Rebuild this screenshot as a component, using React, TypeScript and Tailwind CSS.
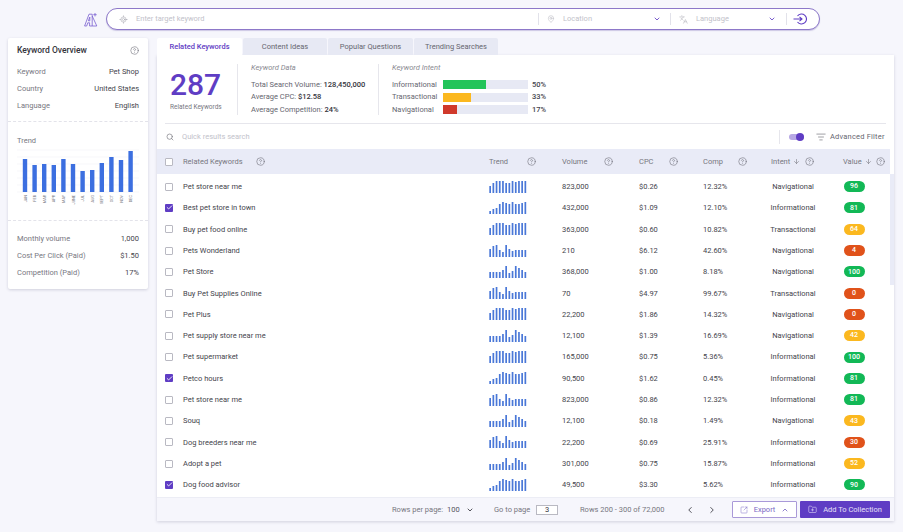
import { ChevronDown, ChevronUp, ChevronLeft, ChevronRight, Search, ArrowDown, CircleHelp, MapPin, Languages, ListFilter, Check, SquareArrowOutUpRight, FolderPlus, LocateFixed } from "lucide-react";

const spark: Record<string, number[]> = {
  a: [7, 10, 12, 12, 12, 10, 10, 12, 11, 12, 12, 12],
  b: [3, 5, 6, 10, 12, 11, 10, 12, 10, 10, 11, 12],
  c: [8, 11, 12, 7, 5, 12, 8, 6, 7, 7, 7, 7],
  d: [6, 6, 6, 6, 8, 12, 5, 7, 12, 10, 8, 6],
};

const rows = [
  ["Pet store near me", "a", "823,000", "$0.26", "12.32%", "Navigational", 96, false],
  ["Best pet store in town", "b", "432,000", "$1.09", "12.10%", "Informational", 81, true],
  ["Buy pet food online", "a", "363,000", "$0.60", "10.82%", "Transactional", 64, false],
  ["Pets Wonderland", "c", "210", "$6.12", "42.60%", "Navigational", 4, false],
  ["Pet Store", "d", "368,000", "$1.00", "8.18%", "Navigational", 100, false],
  ["Buy Pet Supplies Online", "c", "70", "$4.97", "99.67%", "Transactional", 0, false],
  ["Pet Plus", "a", "22,200", "$1.86", "14.32%", "Navigational", 0, false],
  ["Pet supply store near me", "d", "12,100", "$1.39", "16.69%", "Navigational", 42, false],
  ["Pet supermarket", "a", "165,000", "$0.75", "5.36%", "Informational", 100, false],
  ["Petco hours", "b", "90,500", "$1.62", "0.45%", "Informational", 81, true],
  ["Pet store near me", "c", "823,000", "$0.86", "12.32%", "Informational", 81, false],
  ["Souq", "d", "12,100", "$0.18", "1.49%", "Navigational", 43, false],
  ["Dog breeders near me", "c", "22,200", "$0.69", "25.91%", "Informational", 30, false],
  ["Adopt a pet", "d", "301,000", "$0.75", "15.87%", "Informational", 52, false],
  ["Dog food advisor", "b", "49,500", "$3.30", "5.62%", "Informational", 90, true],
] as const;

const months = ["JAN", "FEB", "MAR", "APR", "MAY", "JUNE", "JUL", "AUG", "SEPT", "OCT", "NOV", "DEC"];
const monthBars = [33, 27, 28, 27, 33, 28, 21, 22, 29, 35, 32, 41];

function pillColor(v: number) {
  if (v >= 80) return "bg-[#12b856]";
  if (v >= 40) return "bg-[#fbb81f]";
  return "bg-[#e0521a]";
}

const Help = ({ className = "" }: { className?: string }) => (
  <CircleHelp className={`w-[9px] h-[9px] text-[#6b6b76] shrink-0 ${className}`} strokeWidth={1.5} />
);

const Box = ({ on }: { on?: boolean }) =>
  on ? (
    <div className="w-[8px] h-[8px] rounded-[1px] bg-[#5f3dc4] flex items-center justify-center">
      <Check className="w-[7px] h-[7px] text-white" strokeWidth={3} />
    </div>
  ) : (
    <div className="w-[8px] h-[8px] rounded-[1px] border border-[#b9b9c2] bg-white" />
  );

const Spark = ({ kind }: { kind: string }) => (
  <svg width="38" height="12" viewBox="0 0 38 12" className="block">
    {spark[kind].map((h, i) => (
      <rect key={i} x={i * 3.2 + 0.3} y={12 - h} width="1.7" height={h} fill="#4a78d8" />
    ))}
  </svg>
);

const InfoRow = ({ label, value }: { label: string; value: string }) => (
  <div className="flex justify-between items-center h-[17px] text-[7.5px]">
    <span className="text-[#77777f]">{label}</span>
    <span className="text-[#44444c]">{value}</span>
  </div>
);

const Tab = ({ label, width, active }: { label: string; width: string; active?: boolean }) => (
  <div
    className={`h-[17px] flex items-center justify-center text-[7.5px] rounded-t-[2px] ${width} ${
      active ? "bg-white text-[#5f3dc4] font-medium" : "bg-[#e7e9f4] text-[#66666f]"
    }`}
  >
    {label}
  </div>
);

const Bar = ({ label, pct, color, width }: { label: string; pct: string; color: string; width: string }) => (
  <div className="flex items-center h-[12.7px] text-[7.5px]">
    <span className="w-[51px] text-[#66666f]">{label}</span>
    <div className="w-[85px] h-[9px] bg-[#e7e9f4]">
      <div className={`h-full ${color} ${width}`} />
    </div>
    <span className="ml-[4px] text-[#44444c] font-medium">{pct}</span>
  </div>
);

const tableCols = "grid grid-cols-[18px_306px_73px_77px_64px_60px_60px_62px] items-center pl-[8px]";

export default function App() {
  return (
    <div
      className="w-[903px] h-[532px] overflow-hidden bg-[#f6f6fc] text-[8px] text-[#33333b]"
      style={{ fontFamily: "Roboto, 'Liberation Sans', sans-serif" }}
    >
      {/* search bar */}
      <div className="h-[38px] pt-[8px] pl-[84px] flex items-start gap-[8px]">
        <div className="w-[14px] h-[22px] flex items-center">
          <svg width="14" height="15" viewBox="0 0 14 15" fill="none" stroke="#7a5fd0" strokeWidth="0.8">
            <path d="M0.6 14 L5 2.2 H8.2 V14 H5.6 V10.8 H3.8 L2.7 14 Z" />
            <path d="M4.4 8.8 L5.8 5 V8.8 Z" />
            <path d="M8.2 4 L12.8 14 H8.2" />
            <path d="M11 1 V4.4 M9.3 2.7 H12.7" />
          </svg>
        </div>
        <div className="w-[714px] h-[22px] bg-white rounded-full border border-[#8d78c9] shadow-[0_1px_1px_rgba(80,60,160,0.25)] flex items-center text-[7.5px] text-[#c2c2ca]">
          <LocateFixed className="w-[9px] h-[9px] ml-[12px] text-[#a9a9b2]" strokeWidth={1.5} />
          <span className="ml-[8px] flex-1">Enter target keyword</span>
          <div className="w-px h-[12px] bg-[#e2e2ea]" />
          <MapPin className="w-[8px] h-[8px] ml-[8px] text-[#b5b5bd]" strokeWidth={1.5} />
          <span className="ml-[8px] w-[90px]">Location</span>
          <ChevronDown className="w-[8px] h-[8px] text-[#5f3dc4]" strokeWidth={2.5} />
          <div className="w-px h-[12px] bg-[#e2e2ea] ml-[9px]" />
          <Languages className="w-[9px] h-[9px] ml-[8px] text-[#b5b5bd]" strokeWidth={1.5} />
          <span className="ml-[8px] w-[72px]">Language</span>
          <ChevronDown className="w-[8px] h-[8px] text-[#5f3dc4]" strokeWidth={2.5} />
          <div className="w-px h-[12px] bg-[#e2e2ea] ml-[10px]" />
          <svg width="14" height="12" viewBox="0 0 14 12" fill="none" stroke="#5f3dc4" strokeWidth="1.1" className="ml-[6px] mr-[12px]">
            <path d="M4.5 3 A5 5 0 1 1 4.5 9" />
            <path d="M0.5 6 H9 M6.5 3.8 L9 6 L6.5 8.2" />
          </svg>
        </div>
      </div>

      <div className="flex items-start pl-[8px] gap-[9px]">
        {/* overview card */}
        <div className="w-[140px] h-[251px] bg-white rounded-[2px] shadow-[0_1px_3px_rgba(60,60,100,0.2)]">
          <div className="px-[9px] pt-[5px] h-[84px] border-b border-dashed border-[#e3e3ea]">
            <div className="flex items-center justify-between h-[14px] mb-[6px]">
              <span className="text-[8.5px] font-medium text-[#33333b]">Keyword Overview</span>
              <Help />
            </div>
            <InfoRow label="Keyword" value="Pet Shop" />
            <InfoRow label="Country" value="United States" />
            <InfoRow label="Language" value="English" />
          </div>
          <div className="h-[99px] border-b border-dashed border-[#e3e3ea] px-[9px] pt-[13px]">
            <div className="text-[7.5px] text-[#77777f] mb-[3px]">Trend</div>
            <svg width="122" height="62" viewBox="0 0 122 62" className="block">
              {[0, 7, 14, 21, 28, 35, 42].map((y) => (
                <line key={y} x1="0" x2="122" y1={y + 1} y2={y + 1} stroke="#f1f1f6" strokeWidth="0.6" />
              ))}
              {monthBars.map((h, i) => (
                <rect key={i} x={5.8 + i * 9.6} y={43 - h} width="4.4" height={h} fill="#3c6fe0" />
              ))}
              {months.map((m, i) => (
                <text
                  key={m}
                  transform={`translate(${9.6 + i * 9.6} 46) rotate(-90)`}
                  textAnchor="end"
                  fontSize="3.8"
                  fill="#77777f"
                >
                  {m}
                </text>
              ))}
            </svg>
          </div>
          <div className="px-[9px] pt-[9px]">
            <InfoRow label="Monthly volume" value="1,000" />
            <InfoRow label="Cost Per Click (Paid)" value="$1.50" />
            <InfoRow label="Competition (Paid)" value="17%" />
          </div>
        </div>

        {/* main panel */}
        <div className="w-[737px]">
          <div className="flex gap-px">
            <Tab label="Related Keywords" width="w-[85px]" active />
            <Tab label="Content Ideas" width="w-[84px]" />
            <Tab label="Popular Questions" width="w-[85px]" />
            <Tab label="Trending Searches" width="w-[84px]" />
          </div>
          <div className="bg-white h-[466px] shadow-[0_1px_3px_rgba(60,60,100,0.2)] flex flex-col">
            {/* stats */}
            <div className="h-[69px] mx-[8px] border-b border-[#e6e6ec] flex pt-[9px]">
              <div className="w-[73px] h-[51px] border-r border-[#e6e6ec] pl-[5px]">
                <div className="text-[30px] leading-[32px] font-medium text-[#5f3dc4] mt-[5px]">287</div>
                <div className="text-[6.5px] text-[#77777f] mt-[2px]">Related Keywords</div>
              </div>
              <div className="w-[141px] h-[51px] border-r border-[#e6e6ec] pl-[13px] text-[7.5px] text-[#66666f]">
                <div className="italic text-[#8a8a92] h-[13px] leading-[7px]">Keyword Data</div>
                <div className="h-[12.7px] flex items-center mt-[1px]">
                  Total Search Volume:&nbsp;<b className="font-medium text-[#33333b]">128,450,000</b>
                </div>
                <div className="h-[12.7px] flex items-center">
                  Average CPC:&nbsp;<b className="font-medium text-[#33333b]">$12.58</b>
                </div>
                <div className="h-[12.7px] flex items-center">
                  Average Competition:&nbsp;<b className="font-medium text-[#33333b]">24%</b>
                </div>
              </div>
              <div className="pl-[13px]">
                <div className="italic text-[7.5px] text-[#8a8a92] h-[13px] leading-[7px]">Keyword Intent</div>
                <div className="mt-[1px]">
                  <Bar label="Informational" pct="50%" color="bg-[#22c45a]" width="w-1/2" />
                  <Bar label="Transactional" pct="33%" color="bg-[#fbb81f]" width="w-1/3" />
                  <Bar label="Navigational" pct="17%" color="bg-[#d0392b]" width="w-1/6" />
                </div>
              </div>
            </div>

            {/* quick search */}
            <div className="h-[25px] flex items-center pl-[9px] pr-[10px]">
              <Search className="w-[8px] h-[8px] text-[#77777f]" strokeWidth={2} />
              <span className="ml-[8px] text-[7.5px] text-[#c2c2ca] flex-1">Quick results search</span>
              <div className="w-px h-[14px] bg-[#e6e6ec]" />
              <div className="relative w-[15px] h-[6px] ml-[9px] rounded-full bg-[#b7a8e4]">
                <div className="absolute right-0 -top-[1px] w-[8px] h-[8px] rounded-full bg-[#5f3dc4]" />
              </div>
              <ListFilter className="w-[10px] h-[10px] ml-[12px] text-[#66666f]" strokeWidth={1.5} />
              <span className="ml-[4px] w-[54px] whitespace-nowrap tracking-[0.2px] text-[7.5px] text-[#66666f]">Advanced Filter</span>
            </div>

            {/* table */}
            <div className="h-[25px] w-[733px] bg-[#e9ebf7] text-[7.5px] text-[#77777f]">
              <div className={`${tableCols} h-full`}>
                <Box />
                <div className="flex items-center gap-[13px]"><span>Related Keywords</span><Help /></div>
                <div className="flex items-center gap-[19px]"><span>Trend</span><Help /></div>
                <div className="flex items-center gap-[17px]"><span>Volume</span><Help /></div>
                <div className="flex items-center gap-[15px]"><span>CPC</span><Help /></div>
                <div className="flex items-center gap-[15px]"><span>Comp</span><Help /></div>
                <div className="flex items-center pl-[8px]"><span>Intent</span><ArrowDown className="w-[7px] h-[7px] ml-[3px]" /><Help className="ml-[5px]" /></div>
                <div className="flex items-center pl-[20px]"><span>Value</span><ArrowDown className="w-[7px] h-[7px] ml-[3px]" /><Help className="ml-[4px]" /></div>
              </div>
            </div>
            <div className="relative flex-1 overflow-hidden pt-[2px]">
              {/* scrollbar */}
              <div className="absolute right-0 top-0 w-[4px] h-[111px] bg-[#e9ebf7]" />
              {rows.map(([name, sp, vol, cpc, comp, intent, value, checked], i) => (
                <div key={i} className={`${tableCols} h-[21.3px] text-[7.5px] text-[#44444c]`}>
                  <Box on={checked} />
                  <span>{name}</span>
                  <Spark kind={sp} />
                  <span>{vol}</span>
                  <span>{cpc}</span>
                  <span>{comp}</span>
                  <span className="text-center">{intent}</span>
                  <div className="flex justify-center">
                    <div className={`w-[21px] h-[11px] rounded-full flex items-center justify-center text-[7px] font-medium text-white ${pillColor(value)}`}>
                      {value}
                    </div>
                  </div>
                </div>
              ))}
            </div>

            {/* footer */}
            <div className="h-[24px] bg-[#f6f6fc] border-t border-[#ecedf5] flex items-center text-[7.5px] text-[#77777f] whitespace-nowrap">
              <span className="ml-[235px] w-[51px]">Rows per page:</span>
              <span className="ml-[4px] w-[14px] text-[#55555d]">100</span>
              <ChevronDown className="w-[8px] h-[8px] ml-[5px] text-[#33333b]" strokeWidth={2.5} />
              <span className="ml-[20px] w-[34px]">Go to page</span>
              <div className="ml-[8px] w-[22px] h-[10px] bg-white border border-[#b9b9c2] flex items-center justify-center text-[#33333b]">3</div>
              <span className="ml-[22px] w-[82px]">Rows 200 - 300 of 72,000</span>
              <ChevronLeft className="w-[10px] h-[10px] ml-[23px] text-[#33333b]" strokeWidth={2} />
              <ChevronRight className="w-[10px] h-[10px] ml-[12px] text-[#33333b]" strokeWidth={2} />
              <div className="ml-[15px] w-[65px] h-[17px] border border-[#a999d8] rounded-[1px] bg-white flex items-center justify-center text-[#7a68c4]">
                <SquareArrowOutUpRight className="w-[8px] h-[8px]" strokeWidth={1.5} />
                <span className="ml-[6px]">Export</span>
                <ChevronUp className="w-[8px] h-[8px] ml-[6px]" strokeWidth={2.5} />
              </div>
              <div className="ml-[3px] w-[90px] h-[17px] rounded-[1px] bg-[#5f3dc4] flex items-center justify-center text-[#e6e0f8]">
                <FolderPlus className="w-[9px] h-[9px]" strokeWidth={1.5} />
                <span className="ml-[6px]">Add To Collection</span>
              </div>
            </div>
          </div>
        </div>
      </div>
    </div>
  );
}
